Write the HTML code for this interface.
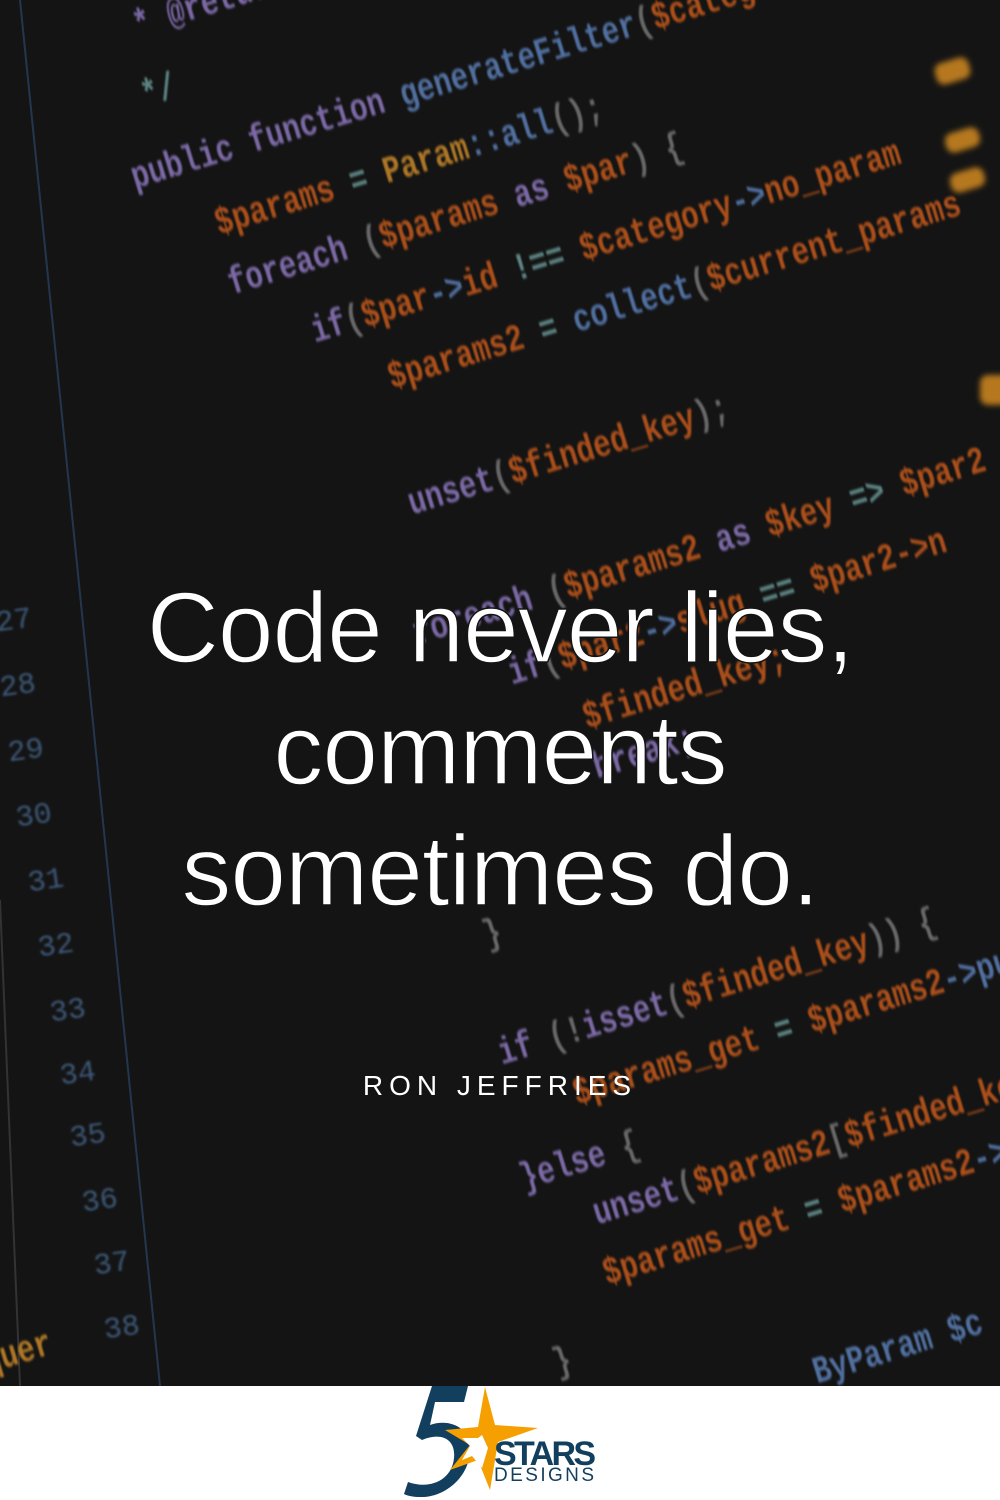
<!DOCTYPE html>
<html><head><meta charset="utf-8"><style>
html,body{margin:0;padding:0;}
body{width:1000px;height:1500px;position:relative;overflow:hidden;background:#fff;font-family:"Liberation Sans",sans-serif;}
#bg{position:absolute;left:0;top:0;width:1000px;height:1386px;background:#141414;overflow:hidden;}
.c{position:absolute;white-space:pre;font-family:"Liberation Mono",monospace;font-weight:bold;font-size:38px;transform-origin:0 100%;transform:rotate(-17deg) scaleX(0.77);filter:blur(1.2px);opacity:.85;line-height:38px;}
.o{color:#c65a1c}.p{color:#8e78bf}.b{color:#5b7fb8}.y{color:#c8882a}.g{color:#6a9a98}.w{color:#777}
.n{position:absolute;font-family:"Liberation Mono",monospace;font-size:30px;color:#3d5878;filter:blur(1px);transform:rotate(-8deg);}
.q{position:absolute;left:0;width:1000px;text-align:center;color:#fff;font-size:100px;line-height:1;letter-spacing:-1px;-webkit-text-stroke:1.5px #141414;}
</style></head><body>
<div id="bg">
<svg width="1000" height="1386" style="position:absolute;left:0;top:0" fill="none" stroke="#24364f" stroke-width="2">
<path d="M20 0 L160 1386"/><path d="M0 900 L20 1386" stroke="#333"/>
</svg>
<div class="c p" style="left:140px;top:8px">* @return</div>
<div class="c g" style="left:148px;top:78px">*/</div>
<div class="c" style="left:138px;top:160px"><span class="p">public function </span><span class="b">generateFilter</span><span class="w">(</span><span class="o">$category, $c</span></div>
<div class="c" style="left:222px;top:206px"><span class="o">$params </span><span class="g">= </span><span class="y">Param</span><span class="b">::all</span><span class="w">();</span></div>
<div class="c" style="left:235px;top:266px"><span class="p">foreach </span><span class="w">(</span><span class="o">$params </span><span class="p">as </span><span class="o">$par</span><span class="w">) {</span></div>
<div class="c" style="left:318px;top:314px"><span class="p">if</span><span class="w">(</span><span class="o">$par</span><span class="b">-&gt;</span><span class="o">id </span><span class="g">!== </span><span class="o">$category</span><span class="b">-&gt;</span><span class="o">no_param</span></div>
<div class="c" style="left:395px;top:360px"><span class="o">$params2 </span><span class="g">= </span><span class="b">collect</span><span class="w">(</span><span class="o">$current_params</span></div>
<div class="c" style="left:415px;top:486px"><span class="p">unset</span><span class="w">(</span><span class="o">$finded_key</span><span class="w">);</span></div>
<div class="c" style="left:420px;top:616px"><span class="p">foreach </span><span class="w">(</span><span class="o">$params2 </span><span class="p">as </span><span class="o">$key </span><span class="g">=&gt; </span><span class="o">$par2</span></div>
<div class="c" style="left:515px;top:656px"><span class="p">if</span><span class="w">(</span><span class="o">$par2</span><span class="b">-&gt;</span><span class="o">slug </span><span class="g">== </span><span class="o">$par2-&gt;n</span></div>
<div class="c o" style="left:590px;top:700px">$finded_key;</div>
<div class="c p" style="left:600px;top:750px">break;</div>
<div class="c w" style="left:490px;top:918px">}</div>
<div class="c" style="left:505px;top:1036px"><span class="p">if </span><span class="w">(!</span><span class="p">isset</span><span class="w">(</span><span class="o">$finded_key</span><span class="w">)) {</span></div>
<div class="c" style="left:580px;top:1076px"><span class="o">$params_get </span><span class="g">= </span><span class="o">$params2</span><span class="b">-&gt;pu</span></div>
<div class="c" style="left:527px;top:1161px"><span class="p">}else </span><span class="w">{</span></div>
<div class="c" style="left:600px;top:1196px"><span class="p">unset</span><span class="w">(</span><span class="o">$params2</span><span class="w">[</span><span class="o">$finded_ke</span></div>
<div class="c" style="left:610px;top:1256px"><span class="o">$params_get </span><span class="g">= </span><span class="o">$params2</span><span class="b">-&gt;</span></div>
<div class="c w" style="left:560px;top:1346px">}</div>
<div class="c b" style="left:820px;top:1355px">ByParam $c</div>
<div class="c y" style="left:-10px;top:1345px">quer</div>
<div class="n" style="left:-4px;top:605px">27</div>
<div class="n" style="left:0px;top:670px">28</div>
<div class="n" style="left:8px;top:735px">29</div>
<div class="n" style="left:16px;top:800px">30</div>
<div class="n" style="left:28px;top:865px">31</div>
<div class="n" style="left:38px;top:930px">32</div>
<div class="n" style="left:50px;top:995px">33</div>
<div class="n" style="left:60px;top:1058px">34</div>
<div class="n" style="left:70px;top:1120px">35</div>
<div class="n" style="left:82px;top:1185px">36</div>
<div class="n" style="left:94px;top:1248px">37</div>
<div class="n" style="left:104px;top:1312px">38</div>
<div style="position:absolute;left:935px;top:60px;width:35px;height:22px;background:#b5781e;border-radius:8px;filter:blur(3px);transform:rotate(-17deg)"></div>
<div style="position:absolute;left:945px;top:130px;width:35px;height:20px;background:#b5781e;border-radius:8px;filter:blur(3px);transform:rotate(-17deg)"></div>
<div style="position:absolute;left:950px;top:170px;width:35px;height:20px;background:#b5781e;border-radius:8px;filter:blur(3px);transform:rotate(-17deg)"></div>
<div style="position:absolute;left:980px;top:375px;width:30px;height:30px;background:#b5781e;border-radius:8px;filter:blur(3px)"></div>
<div class="q" style="top:578px">Code never lies,</div>
<div class="q" style="top:700px">comments</div>
<div class="q" style="top:821px">sometimes do.</div>
<div style="position:absolute;left:0;width:1000px;top:1070px;text-align:center;color:#fff;font-size:28px;letter-spacing:6px;">RON JEFFRIES</div>
</div>
<svg width="220" height="120" viewBox="0 0 220 120" style="position:absolute;left:390px;top:1380px">
<path d="M42 6 H78 L74 22 H45 L40 45 C60 38 82 48 80 72 C78 100 52 118 30 117 C24 117 18 116 14 114 L18 102 C40 110 62 100 64 78 C66 58 50 52 32 60 L26 56 Z" fill="#123f5e"/>
<path d="M95 7 L105 45 L148 48 L108 62 L100 110 L88 80 L60 90 L80 65 L55 50 L88 47 Z" fill="#f5a000"/>
<path d="M92 55 L98 68 L92 88 L82 76 L72 80 L80 66 L72 58 L88 58 Z" fill="#fff"/>
<text x="104" y="85" font-family="Liberation Sans, sans-serif" font-weight="bold" font-size="34" fill="#123f5e" letter-spacing="-2" textLength="100">STARS</text>
<text x="104" y="101" font-family="Liberation Sans, sans-serif" font-size="19" fill="#123f5e" textLength="100">DESIGNS</text>
</svg>
</body></html>
